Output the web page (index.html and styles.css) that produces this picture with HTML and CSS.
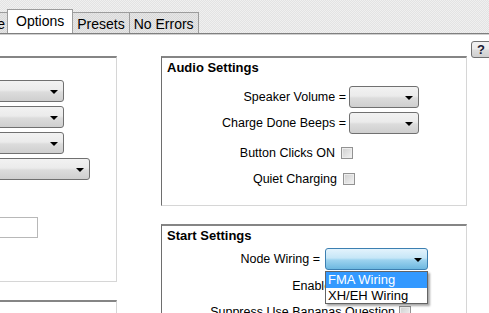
FILE: index.html
```html
<!DOCTYPE html>
<html lang="en">
<head>
    <meta charset="UTF-8">
    <title>Charger Setup - Options</title>
    <link rel="stylesheet" href="styles.css">
</head>
<body>
    <div class="tabstrip">
        <div class="tab tab-cut">Profile</div>
        <div class="tab tab-active">Options</div>
        <div class="tab">Presets</div>
        <div class="tab">No Errors</div>
    </div>

    <div class="page">
        <div class="col-left">
            <div class="group group-left">
                <div class="combo combo-left"></div>
                <div class="combo combo-left"></div>
                <div class="combo combo-left"></div>
                <div class="combo combo-left combo-wide"></div>
                <div class="textbox"></div>
            </div>
            <div class="group group-left-low"></div>
        </div>

        <div class="col-mid">
            <div class="group group-audio">
                <div class="group-title">Audio Settings</div>
                <div class="row row-volume">
                    <span>Speaker Volume =</span>
                    <div class="combo combo-small"></div>
                </div>
                <div class="row row-beeps">
                    <span>Charge Done Beeps =</span>
                    <div class="combo combo-small"></div>
                </div>
                <div class="row row-clicks">
                    <span>Button Clicks ON</span>
                    <div class="checkbox"></div>
                </div>
                <div class="row row-quiet">
                    <span>Quiet Charging</span>
                    <div class="checkbox"></div>
                </div>
            </div>

            <div class="group group-start">
                <div class="group-title">Start Settings</div>
                <div class="row row-wiring">
                    <span>Node Wiring =</span>
                    <div class="combo combo-blue"></div>
                </div>
                <div class="row row-enable">
                    <span>Enable Auto Run</span>
                    <div class="checkbox"></div>
                </div>
                <div class="row row-suppress">
                    <span>Suppress Use Bananas Question</span>
                    <div class="checkbox"></div>
                </div>

                <!-- open list of the Node Wiring combo -->
                <div class="dropdown-list">
                    <div class="dropdown-item selected">FMA Wiring</div>
                    <div class="dropdown-item">XH/EH Wiring</div>
                </div>
            </div>
        </div>

        <button class="help">?</button>
    </div>
</body>
</html>
```

FILE: styles.css
```css
body {
    margin: 0;
    width: 489px;
    height: 313px;
    overflow: hidden;
    background-color: white;
    font-family: 'Liberation Sans', Arial, sans-serif;
    font-size: 12.5px;
    color: #000;
}

.tabstrip {
    display: flex;
    align-items: flex-end;
    height: 33px;
    border-bottom: 1px solid #7f7f7f;
    background: repeating-conic-gradient(#e3e3e3 0 25%, #f0f0f0 0 50%) 0 0 / 2px 2px;
}

.tab {
    flex-shrink: 0;
    box-sizing: border-box;
    height: 21px;
    padding: 3px 4px 0 4px;
    margin-left: -1px;
    border: 1px solid #9c9c9c;
    border-bottom: none;
    font-size: 14px;
    background: repeating-conic-gradient(#d9d9d9 0 25%, #e6e6e6 0 50%) 0 0 / 2px 2px;
}

.tab-cut {
    width: 60px;
    margin-left: -52px;
    padding-right: 2px;
    text-align: right;
}

.tab-active {
    height: 24px;
    padding: 3px 8px 0 8px;
    background: white;
}

.page {
    display: flex;
    align-items: flex-start;
    height: 278px;
    overflow: hidden;
    border-top: 1px solid #d0d0d0;
}

.col-left {
    flex-shrink: 0;
    width: 177px;
    margin-left: -60px;
    margin-top: 21px;
}

.col-mid {
    flex-shrink: 0;
    width: 306px;
    margin-left: 44px;
    margin-top: 21px;
}

.group {
    box-sizing: border-box;
    border-top: 2px solid #858585;
    border-left: 1px solid #6e6e6e;
    border-right: 1px solid #d6d6d6;
    border-bottom: 1px solid #d6d6d6;
    padding-top: 2px;
}

.group-left {
    height: 226px;
    padding-top: 22px;
}

.group-left-low {
    height: 20px;
    margin-top: 18px;
}

.group-audio {
    height: 150px;
}

.group-start {
    position: relative;
    height: 100px;
    margin-top: 18px;
}

.group-title {
    font-weight: bold;
    font-size: 13px;
    line-height: 15px;
    padding-left: 5px;
}

.combo {
    flex-shrink: 0;
    position: relative;
    box-sizing: border-box;
    height: 22px;
    border: 1px solid #707070;
    border-radius: 3px;
    background: linear-gradient(#f2f2f2, #ebebeb 45%, #dcdcdc 55%, #cfcfcf);
}

.combo::after {
    content: '';
    position: absolute;
    right: 5px;
    top: 9px;
    border-left: 4px solid transparent;
    border-right: 4px solid transparent;
    border-top: 4px solid #000;
}

.combo-left {
    width: 123px;
    margin-bottom: 4px;
}

.combo-wide {
    width: 149px;
}

.combo-small {
    width: 70px;
}

.combo-blue {
    width: 103px;
    border-color: #3c7fb1;
    background: linear-gradient(#e3f3fc, #c6e6f7 45%, #9dd3ef 55%, #6db8e0);
}

.textbox {
    box-sizing: border-box;
    width: 97px;
    height: 21px;
    margin-top: 37px;
    border: 1px solid #b8b8b8;
}

.row {
    display: flex;
    justify-content: flex-end;
    align-items: center;
    height: 22px;
    gap: 3px;
}

.checkbox {
    flex-shrink: 0;
    box-sizing: border-box;
    width: 12px;
    height: 12px;
    border: 1px solid #929292;
    background: linear-gradient(135deg, #cfcfcf, #f3f3f3);
    box-shadow: inset 0 0 0 1px #ededed;
}

.row-volume {
    margin-top: 11px;
    padding-right: 47px;
}

.row-beeps {
    margin-top: 4px;
    padding-right: 47px;
}

.row-clicks {
    margin-top: 8px;
    padding-right: 113px;
    gap: 6px;
}

.row-quiet {
    margin-top: 4px;
    padding-right: 111px;
    gap: 6px;
}

.row-wiring {
    margin-top: 5px;
    padding-right: 38px;
    gap: 5px;
}

.row-enable {
    margin-top: 5px;
    padding-right: 62px;
    gap: 6px;
}

.row-suppress {
    margin-top: 4px;
    padding-right: 55px;
    gap: 4px;
}

.dropdown-list {
    position: absolute;
    left: 163px;
    top: 45px;
    box-sizing: border-box;
    width: 103px;
    border: 1px solid #646464;
    background: white;
    box-shadow: 2px 2px 2px rgba(0,0,0,0.35);
}

.dropdown-item {
    height: 15px;
    line-height: 15px;
    padding-left: 2px;
    font-size: 13px;
}

.dropdown-item.selected {
    height: 16px;
    line-height: 16px;
    background-color: #3399ff;
    color: white;
}

.help {
    flex-shrink: 0;
    box-sizing: border-box;
    width: 22px;
    height: 17px;
    margin-left: 4px;
    margin-top: 6px;
    padding: 0 0 0 5px;
    text-align: left;
    border: 1px solid #707070;
    border-radius: 3px;
    background: linear-gradient(#f2f2f2, #ebebeb 45%, #dcdcdc 55%, #cfcfcf);
    font-family: 'Liberation Sans', Arial, sans-serif;
    font-weight: bold;
    font-size: 13px;
    color: #1a1a33;
}
```
